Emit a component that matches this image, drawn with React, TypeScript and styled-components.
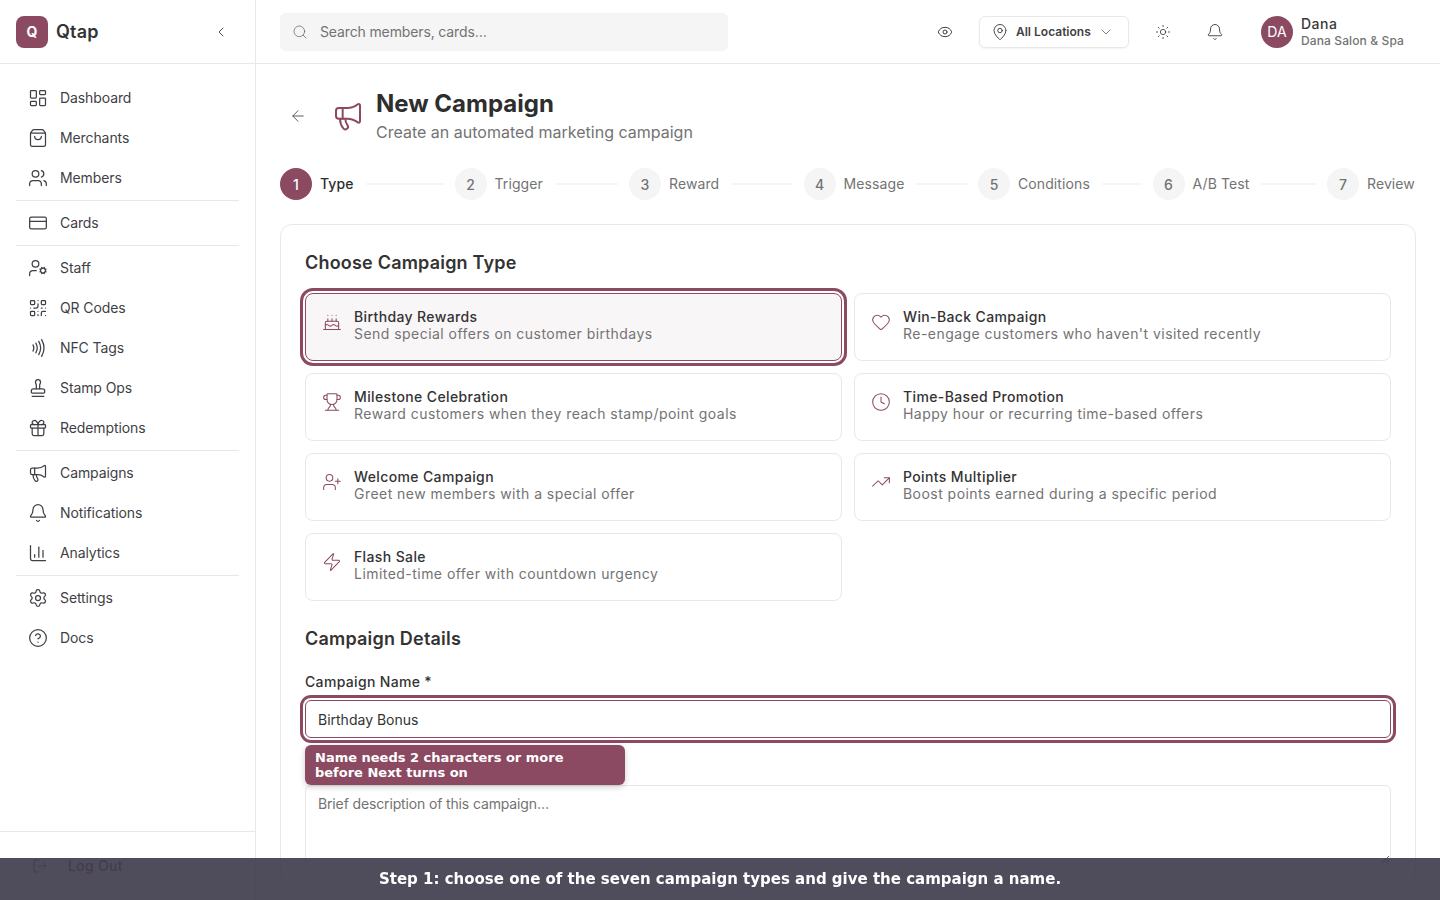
import React from "react";
import styled, { createGlobalStyle } from "styled-components";
import {
  ArrowLeft,
  Bell,
  Cake,
  ChartColumn,
  ChevronDown,
  ChevronLeft,
  CircleHelp,
  Clock,
  CreditCard,
  Eye,
  Gift,
  Heart,
  LayoutDashboard,
  LogOut,
  MapPin,
  Megaphone,
  Nfc,
  QrCode,
  Search,
  Settings,
  ShoppingBag,
  Stamp,
  Sun,
  TrendingUp,
  Trophy,
  UserCog,
  UserPlus,
  Users,
  Zap,
} from "lucide-react";

const BRAND = "#8b4a62";

const navGroups = [
  [
    { label: "Dashboard", icon: LayoutDashboard },
    { label: "Merchants", icon: ShoppingBag },
    { label: "Members", icon: Users },
  ],
  [{ label: "Cards", icon: CreditCard }],
  [
    { label: "Staff", icon: UserCog },
    { label: "QR Codes", icon: QrCode },
    { label: "NFC Tags", icon: Nfc },
    { label: "Stamp Ops", icon: Stamp },
    { label: "Redemptions", icon: Gift },
  ],
  [
    { label: "Campaigns", icon: Megaphone },
    { label: "Notifications", icon: Bell },
    { label: "Analytics", icon: ChartColumn },
  ],
  [
    { label: "Settings", icon: Settings },
    { label: "Docs", icon: CircleHelp },
  ],
];

const steps = ["Type", "Trigger", "Reward", "Message", "Conditions", "A/B Test", "Review"];

const campaignTypes = [
  { title: "Birthday Rewards", text: "Send special offers on customer birthdays", icon: Cake, selected: true },
  { title: "Win-Back Campaign", text: "Re-engage customers who haven't visited recently", icon: Heart },
  { title: "Milestone Celebration", text: "Reward customers when they reach stamp/point goals", icon: Trophy },
  { title: "Time-Based Promotion", text: "Happy hour or recurring time-based offers", icon: Clock },
  { title: "Welcome Campaign", text: "Greet new members with a special offer", icon: UserPlus },
  { title: "Points Multiplier", text: "Boost points earned during a specific period", icon: TrendingUp },
  { title: "Flash Sale", text: "Limited-time offer with countdown urgency", icon: Zap },
];

const GlobalStyle = createGlobalStyle`
  * {
    box-sizing: border-box;
  }

  html,
  body {
    margin: 0;
    height: 100%;
    overflow: hidden;
    background: #fff;
    color: #333;
    font-family: Inter, "Liberation Sans", sans-serif;
  }
`;

const Shell = styled.div`
  display: flex;
  height: 900px;
  overflow: hidden;
`;

const Sidebar = styled.aside`
  display: flex;
  flex-direction: column;
  flex: 0 0 256px;
  border-right: 1px solid #e8e8e8;
`;

const Brand = styled.div`
  display: flex;
  align-items: center;
  gap: 8px;
  height: 64px;
  padding: 0 26px 0 16px;
  border-bottom: 1px solid #e8e8e8;
`;

const LogoMark = styled.div`
  display: flex;
  align-items: center;
  justify-content: center;
  width: 32px;
  height: 32px;
  border-radius: 8px;
  background: ${BRAND};
  color: #fff;
  font-size: 14px;
  font-weight: 700;
`;

const BrandName = styled.span`
  flex: 1;
  font-size: 18px;
  font-weight: 600;
  letter-spacing: 0.2px;
`;

const Nav = styled.nav`
  flex: 1;
  padding: 14px 16px 0;
`;

const NavGroup = styled.div`
  & + & {
    margin-top: 2px;
    padding-top: 2px;
    border-top: 1px solid #e8e8e8;
  }
`;

const NavItem = styled.div`
  display: flex;
  align-items: center;
  gap: 12px;
  height: 40px;
  padding: 0 12px;
  color: #3f3f46;
  font-size: 14px;
`;

const NavLabel = styled.span`
  padding-bottom: 2px;
  letter-spacing: -0.1px;
`;

const SidebarFoot = styled.div`
  height: 69px;
  padding: 14px 16px 0;
  border-top: 1px solid #e8e8e8;
`;

const LogOutItem = styled(NavItem)`
  gap: 20px;
  padding-left: 16px;
  color: ${BRAND};
  font-weight: 500;
`;

const LogOutLabel = styled.span`
  padding-bottom: 2px;
  letter-spacing: 0.3px;
`;

const Content = styled.div`
  display: flex;
  flex-direction: column;
  flex: 1;
  min-width: 0;
`;

const TopBar = styled.header`
  display: flex;
  flex: 0 0 64px;
  align-items: center;
  padding: 0 24px;
  border-bottom: 1px solid #e8e8e8;
`;

const SearchBox = styled.div`
  display: flex;
  align-items: center;
  gap: 12px;
  width: 448px;
  height: 38px;
  margin-top: 1px;
  padding: 0 12px 1px;
  border-radius: 6px;
  background: #f5f5f5;
  color: #737373;
  font-size: 14px;
  letter-spacing: -0.13px;
`;

const TopActions = styled.div`
  display: flex;
  align-items: center;
  margin-left: auto;
`;

const IconButton = styled.span<{ $gap: number }>`
  display: flex;
  margin-right: ${(p) => p.$gap}px;
  color: #3f3f46;
`;

const LocationPicker = styled.div`
  display: flex;
  align-items: center;
  gap: 7px;
  width: 150px;
  height: 32px;
  margin-right: 26px;
  padding: 0 11px;
  border: 1px solid #e8e8e8;
  border-radius: 6px;
  box-shadow: 0 1px 2px rgba(0, 0, 0, 0.05);
  color: #3f3f46;
  font-size: 12px;
  font-weight: 600;
  white-space: nowrap;
`;

const Avatar = styled.div`
  display: flex;
  align-items: center;
  justify-content: center;
  width: 32px;
  height: 32px;
  margin-right: 8px;
  border-radius: 50%;
  background: ${BRAND};
  color: #fff;
  font-size: 14px;
`;

const UserBlock = styled.div`
  width: 115px;
`;

const UserName = styled.div`
  color: #3a3a3a;
  font-size: 14px;
  font-weight: 500;
  letter-spacing: 0.5px;
  line-height: 18px;
`;

const UserSub = styled.div`
  color: #737373;
  font-size: 12px;
  font-weight: 500;
  letter-spacing: 0.12px;
  line-height: 16px;
`;

const Main = styled.main`
  flex: 1;
  min-height: 0;
  padding: 24px 24px 0;
`;

const PageHead = styled.div`
  display: flex;
  align-items: center;
  height: 56px;
  margin-bottom: 24px;
`;

const BackLink = styled.span`
  display: flex;
  width: 52px;
  padding-left: 9px;
  color: #525252;
`;

const PageIcon = styled.span`
  display: flex;
  margin-right: 12px;
  color: ${BRAND};
`;

const PageTitle = styled.h1`
  margin: 0;
  color: #2e2e2e;
  font-size: 24px;
  font-weight: 700;
  line-height: 32px;
`;

const PageSubtitle = styled.p`
  margin: 0;
  color: #737373;
  font-size: 16px;
  line-height: 24px;
`;

const Stepper = styled.div`
  display: flex;
  align-items: center;
  margin-bottom: 24px;
`;

const StepItem = styled.div<{ $last: boolean }>`
  display: flex;
  flex: ${(p) => (p.$last ? "0 0 89px" : "1")};
  align-items: center;
  gap: 8px;
`;

const StepDot = styled.span<{ $active: boolean }>`
  display: flex;
  flex: none;
  align-items: center;
  justify-content: center;
  width: 32px;
  height: 32px;
  border-radius: 50%;
  background: ${(p) => (p.$active ? BRAND : "#f5f5f5")};
  color: ${(p) => (p.$active ? "#fff" : "#737373")};
  font-size: 14px;
  font-weight: 500;
`;

const StepLabel = styled.span<{ $active: boolean }>`
  padding-bottom: 2px;
  color: ${(p) => (p.$active ? "#2e2e2e" : "#737373")};
  font-size: 14px;
  font-weight: ${(p) => (p.$active ? 500 : 400)};
  letter-spacing: 0.1px;
`;

const StepLine = styled.span`
  flex: 1;
  height: 2px;
  margin: 0 11px 0 4px;
  background: #f5f5f5;
`;

const Card = styled.section`
  padding: 24px;
  border: 1px solid #e8e8e8;
  border-radius: 12px;
`;

const SectionTitle = styled.h2`
  margin: 0 0 16px;
  color: #333;
  font-size: 18px;
  font-weight: 600;
  letter-spacing: 0.2px;
  line-height: 28px;
`;

const TypeGrid = styled.div`
  display: grid;
  grid-template-columns: 1fr 1fr;
  gap: 12px;
  margin-bottom: 24px;
`;

const TypeCard = styled.div<{ $selected?: boolean }>`
  display: flex;
  align-items: flex-start;
  gap: 12px;
  height: 68px;
  padding: 14px 16px 0;
  border: 1px solid ${(p) => (p.$selected ? BRAND : "#e8e8e8")};
  border-radius: 8px;
  background: ${(p) => (p.$selected ? "#f9f6f7" : "#fff")};
  box-shadow: ${(p) => (p.$selected ? `0 0 0 2px #fff, 0 0 0 5px ${BRAND}` : "none")};
  color: ${BRAND};
`;

const TypeIcon = styled.span`
  display: flex;
  margin-top: 4px;
`;

const TypeTitle = styled.div`
  color: #333;
  font-size: 14px;
  font-weight: 500;
  letter-spacing: 0.37px;
  line-height: 17px;
`;

const TypeText = styled.div`
  color: #737373;
  font-size: 14px;
  letter-spacing: 0.46px;
  line-height: 17px;
`;

const FieldLabel = styled.label`
  display: block;
  margin-bottom: 8px;
  padding-top: 3px;
  color: #333;
  font-size: 14px;
  font-weight: 500;
  letter-spacing: 0.33px;
  line-height: 20px;
`;

const NameField = styled.div`
  position: relative;
  margin-bottom: 47px;
`;

const NameInput = styled.input`
  display: block;
  width: 100%;
  height: 38px;
  padding: 0 12px;
  border: 1px solid ${BRAND};
  border-radius: 6px;
  outline: none;
  box-shadow: 0 0 0 2px #fff, 0 0 0 5px ${BRAND};
  color: #333;
  font-family: inherit;
  font-size: 14px;
`;

const Hint = styled.div`
  position: absolute;
  top: 45px;
  left: 0;
  z-index: 2;
  width: 320px;
  height: 40px;
  padding: 5px 10px;
  border-radius: 6px;
  background: ${BRAND};
  box-shadow: 0 2px 6px rgba(0, 0, 0, 0.2);
  color: #fff;
  font-family: "DejaVu Sans", sans-serif;
  font-size: 13px;
  font-weight: 700;
  line-height: 15px;
`;

const Description = styled.textarea`
  display: block;
  width: 100%;
  height: 80px;
  padding: 8px 12px;
  border: 1px solid #e8e8e8;
  border-radius: 6px;
  outline: none;
  font-family: inherit;
  font-size: 14px;
  letter-spacing: -0.14px;
  line-height: 20px;

  &::placeholder {
    color: #737373;
  }
`;

const Banner = styled.div`
  position: fixed;
  right: 0;
  bottom: 0;
  left: 0;
  z-index: 5;
  display: flex;
  align-items: center;
  justify-content: center;
  height: 42px;
  background: rgba(60, 58, 74, 0.9);
  color: #fff;
  font-family: "DejaVu Sans", sans-serif;
  font-size: 15px;
  font-weight: 700;
`;

export default function App() {
  return (
    <>
      <GlobalStyle />
      <Shell>
        <Sidebar>
          <Brand>
            <LogoMark>Q</LogoMark>
            <BrandName>Qtap</BrandName>
            <ChevronLeft size={16} strokeWidth={1.5} color="#525252" />
          </Brand>
          <Nav>
            {navGroups.map((group, idx) => (
              <NavGroup key={idx}>
                {group.map(({ label, icon: Icon }) => (
                  <NavItem key={label}>
                    <Icon size={20} strokeWidth={1.5} />
                    <NavLabel>{label}</NavLabel>
                  </NavItem>
                ))}
              </NavGroup>
            ))}
          </Nav>
          <SidebarFoot>
            <LogOutItem>
              <LogOut size={16} strokeWidth={1.5} />
              <LogOutLabel>Log Out</LogOutLabel>
            </LogOutItem>
          </SidebarFoot>
        </Sidebar>
        <Content>
          <TopBar>
            <SearchBox>
              <Search size={16} strokeWidth={1.25} />
              Search members, cards…
            </SearchBox>
            <TopActions>
              <IconButton $gap={26}>
                <Eye size={16} strokeWidth={1.5} />
              </IconButton>
              <LocationPicker>
                <MapPin size={18} strokeWidth={1.25} />
                All Locations
                <ChevronDown size={16} strokeWidth={1} />
              </LocationPicker>
              <IconButton $gap={35}>
                <Sun size={16} strokeWidth={1.25} />
              </IconButton>
              <IconButton $gap={37}>
                <Bell size={18} strokeWidth={1.25} />
              </IconButton>
              <Avatar>DA</Avatar>
              <UserBlock>
                <UserName>Dana</UserName>
                <UserSub>Dana Salon &amp; Spa</UserSub>
              </UserBlock>
            </TopActions>
          </TopBar>
          <Main>
            <PageHead>
              <BackLink>
                <ArrowLeft size={18} strokeWidth={1.25} />
              </BackLink>
              <PageIcon>
                <Megaphone size={32} strokeWidth={1.5} />
              </PageIcon>
              <div>
                <PageTitle>New Campaign</PageTitle>
                <PageSubtitle>Create an automated marketing campaign</PageSubtitle>
              </div>
            </PageHead>
            <Stepper>
              {steps.map((step, idx) => (
                <StepItem key={step} $last={idx === steps.length - 1}>
                  <StepDot $active={idx === 0}>{idx + 1}</StepDot>
                  <StepLabel $active={idx === 0}>{step}</StepLabel>
                  {idx < steps.length - 1 && <StepLine />}
                </StepItem>
              ))}
            </Stepper>
            <Card>
              <SectionTitle>Choose Campaign Type</SectionTitle>
              <TypeGrid>
                {campaignTypes.map(({ title, text, icon: Icon, selected }) => (
                  <TypeCard key={title} $selected={selected}>
                    <TypeIcon>
                      <Icon size={20} strokeWidth={1.25} />
                    </TypeIcon>
                    <div>
                      <TypeTitle>{title}</TypeTitle>
                      <TypeText>{text}</TypeText>
                    </div>
                  </TypeCard>
                ))}
              </TypeGrid>
              <SectionTitle>Campaign Details</SectionTitle>
              <FieldLabel>Campaign Name *</FieldLabel>
              <NameField>
                <NameInput readOnly value="Birthday Bonus" />
                <Hint>
                  Name needs 2 characters or more
                  <br />
                  before Next turns on
                </Hint>
              </NameField>
              <Description placeholder="Brief description of this campaign…" />
            </Card>
          </Main>
        </Content>
      </Shell>
      <Banner>Step 1: choose one of the seven campaign types and give the campaign a name.</Banner>
    </>
  );
}
